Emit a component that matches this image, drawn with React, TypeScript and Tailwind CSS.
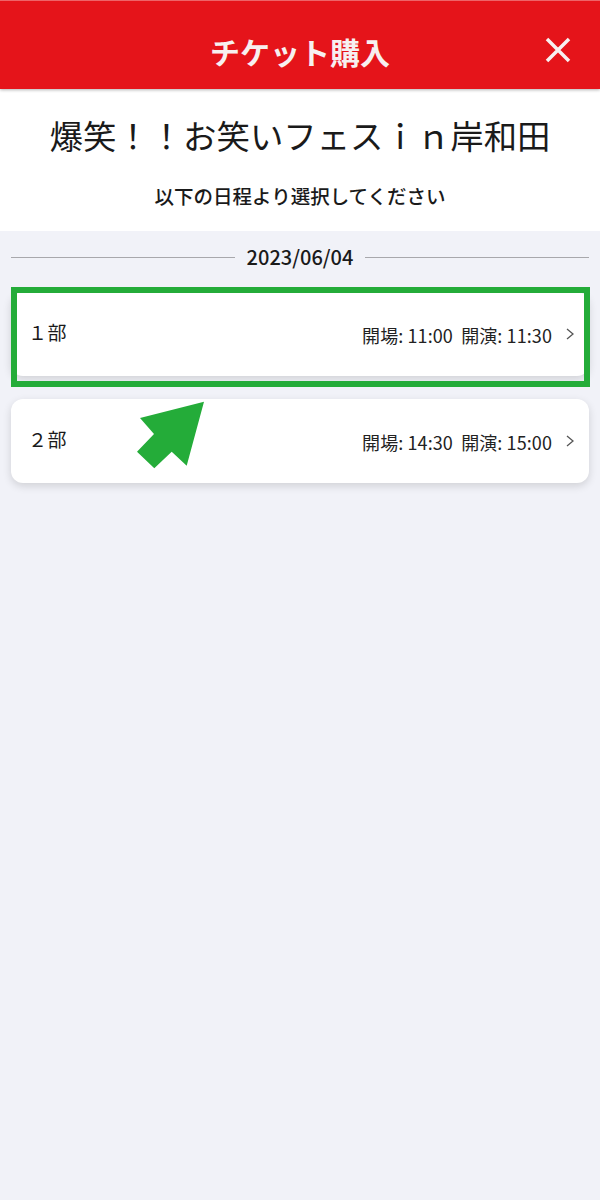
import React from "react";

const font = { fontFamily: '"Noto Sans CJK JP", "Noto Sans", sans-serif' };

function Row({ name, open, start }: { name: string; open: string; start: string }) {
  return (
    <div className="flex h-[84px] items-center rounded-xl bg-white pl-[17px] pr-[15px] shadow-[0_3px_8px_rgba(0,0,0,0.14)]">
      <span className="mt-[-6px] text-[19px] leading-none tracking-[0.02em] text-[#1a1a1a]">{name}</span>
      <span className="ml-auto mr-[-1px] mt-[1px] text-[18px] leading-none tracking-[0.005em] text-[#222]">
        開場: {open}&nbsp;&nbsp;開演: {start}
      </span>
      <svg width="8" height="12" viewBox="0 0 8 12" className="ml-[15px] mt-[-1px]" fill="none" stroke="#555" strokeWidth="1.3">
        <path d="M1 1l6 5-6 5" />
      </svg>
    </div>
  );
}

export default function App() {
  return (
    <div className="relative h-[1200px] w-[600px] overflow-hidden bg-[#f1f2f8]" style={font}>
      <header className="relative flex h-[89px] items-center justify-center border-t border-[#ee6468] bg-[#e5141a] shadow-[0_1px_3px_rgba(0,0,0,0.3)]">
        <h1 className="mt-[12px] text-[30px] font-bold leading-none text-[#f7f0f0]">チケット購入</h1>
        <svg width="26" height="26" viewBox="0 0 26 26" className="absolute right-[29px] top-[36px]" stroke="#f7f0f0" strokeWidth="3.500" fill="none">
          <path d="M2 2l22 22M24 2L2 24" />
        </svg>
      </header>
      <section className="flex h-[142px] flex-col items-center bg-white">
        <h2 className="mt-[22px] text-[33.400px] font-normal leading-[48px] text-[#1a1a1a]">爆笑！！お笑いフェスｉｎ岸和田</h2>
        <p className="mt-[23px] text-[19.500px] font-medium leading-[28px] text-[#1a1a1a]">以下の日程より選択してください</p>
      </section>
      <div className="flex flex-col px-[11px]">
        <div className="mt-[12px] flex h-[28px] items-center gap-[12px]">
          <div className="h-px flex-1 bg-[#a8a8ac]" />
          <span className="text-[20px] font-medium leading-none text-[#1a1a1a]">2023/06/04</span>
          <div className="h-px flex-1 bg-[#a8a8ac]" />
        </div>
        <div className="mt-[21px] flex flex-col gap-[23px]">
          <Row name="１部" open="11:00" start="11:30" />
          <Row name="２部" open="14:30" start="15:00" />
        </div>
      </div>
      <div className="absolute left-[11px] top-[287px] h-[100px] w-[579px] border-[6px] border-[#24ac39]" />
      <svg width="70" height="70" viewBox="0 0 70 70" className="absolute left-[137px] top-[401px]" fill="#24ac39">
        <path d="M67 0.700L3 17L17 33L0 50.700L17.300 67.300L34.700 50.700L49.700 64.700Z" />
      </svg>
    </div>
  );
}
